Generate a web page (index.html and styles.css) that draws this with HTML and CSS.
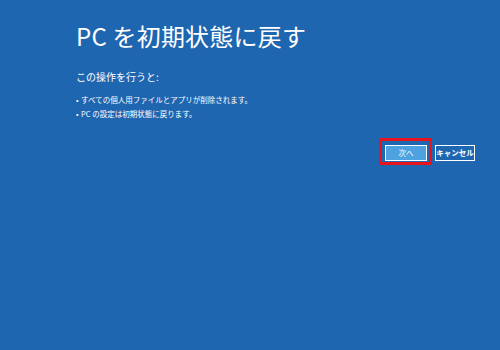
FILE: index.html
```html
<!DOCTYPE html>
<html lang="ja">

<head>
    <meta charset="UTF-8">
    <title>PC を初期状態に戻す</title>
    <link rel="stylesheet" href="styles.css">
</head>

<body>
    <div class="reset">
        <h1 class="title">PC を初期状態に戻す</h1>
        <p class="lead">この操作を行うと:</p>
        <ul class="notes">
            <li>すべての個人用ファイルとアプリが削除されます。</li>
            <li>PC の設定は初期状態に戻ります。</li>
        </ul>
        <div class="actions">
            <span class="mark"><button class="btn btn-next">次へ</button></span>
            <button class="btn">キャンセル</button>
        </div>
    </div>
</body>

</html>
```

FILE: styles.css
```css
html,
body,
h1,
p,
ul,
li {
    margin: 0;
    padding: 0;
}

ul {
    list-style: none;
}

body {
    width: 500px;
    height: 350px;
    background: #1f66b0;
    color: #fff;
    font-family: "Noto Sans CJK JP", "Noto Sans", sans-serif;
    overflow: hidden;
}

.reset {
    padding: 21px 25px 0 76px;
}

.title {
    font-size: 24px;
    font-weight: normal;
    line-height: 30px;
    letter-spacing: 0.2px;
}

.lead {
    margin-top: 19px;
    font-size: 10px;
    line-height: 14px;
}

.notes {
    margin-top: 9px;
    font-size: 7.5px;
    line-height: 14px;
}

.notes li::before {
    content: "•";
    display: inline-block;
    width: 5px;
}

.actions {
    display: flex;
    justify-content: flex-end;
    align-items: center;
    gap: 3px;
    margin-top: 17px;
}

.mark {
    display: flex;
    border: 3px solid #e8131b;
    padding: 4px 2px 1px 3px;
}

.btn {
    height: 16px;
    width: 40px;
    padding: 0;
    border: 1px solid #fff;
    background: transparent;
    color: #fff;
    font-family: inherit;
    font-size: 7.5px;
    font-weight: bold;
    line-height: 14px;
    margin-top: 2px;
}

.btn-next {
    width: 42px;
    margin-top: 0;
    background: #4da2df;
    font-weight: normal;
}
```
